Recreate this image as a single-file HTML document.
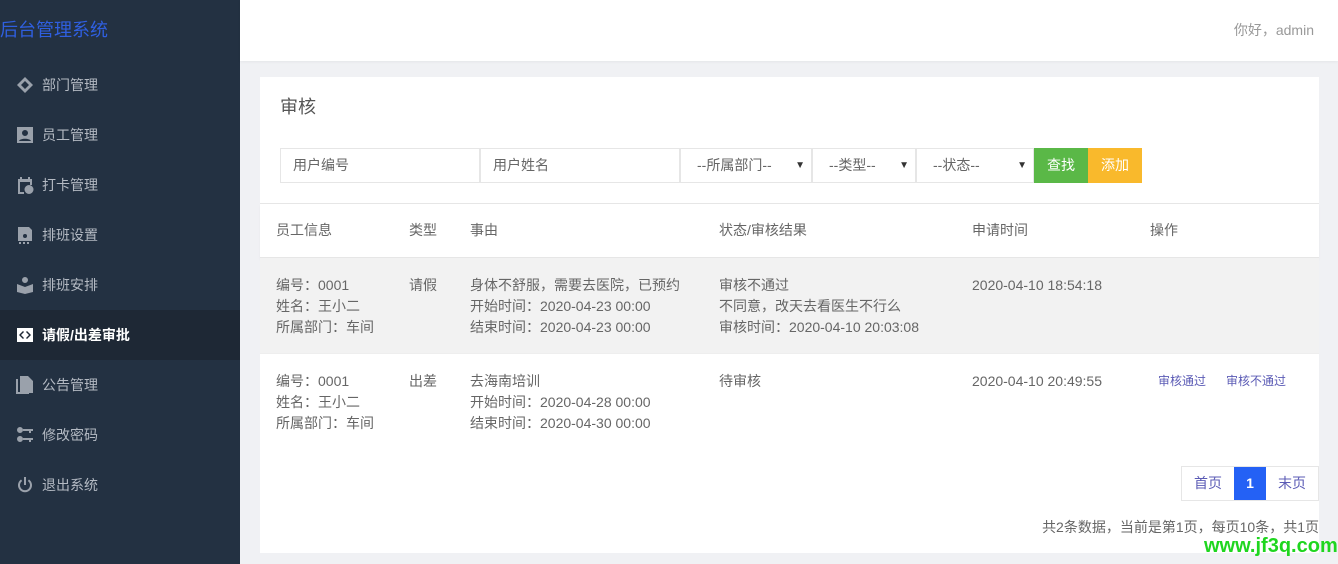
<!DOCTYPE html>
<html><head><meta charset="utf-8"><style>
*{margin:0;padding:0;box-sizing:border-box}
body{width:1338px;height:564px;overflow:hidden;font-family:"Liberation Sans","Noto Sans CJK SC",sans-serif;background:#f0f1f4;position:relative;color:#666;font-size:14px}
.side{position:absolute;left:0;top:0;width:240px;height:564px;background:#233142}
.logo{position:absolute;left:0;top:16px;font-size:18px;color:#2f5fe0}
.menu{position:absolute;top:60px;left:0;width:240px}
.mi{height:50px;display:flex;align-items:center;padding-left:16px;color:#b4bac3;font-size:14px}
.mi svg{width:18px;height:18px;margin-right:8px;fill:#9aa1ab}
.mi.act{background:#1e2835;color:#fff;font-weight:bold}
.mi.act svg{fill:#fff}
.top{position:absolute;left:240px;top:0;width:1098px;height:61px;background:#fff;box-shadow:0 1px 3px rgba(0,0,0,.05)}
.hi{position:absolute;right:24px;top:20px;color:#999;font-size:14px}
.card{position:absolute;left:260px;top:77px;width:1059px;height:476px;background:#fff}
.title{position:absolute;left:20px;top:16px;font-size:18px;color:#555}
.f{position:absolute;top:71px;height:35px;border:1px solid #e6e6e6;font-size:14px;color:#666;padding-left:12px;line-height:33px}
.f .ar{position:absolute;right:6px;top:0;font-size:10px;color:#333}
.btn{position:absolute;top:71px;height:35px;width:54px;color:#fff;line-height:35px;text-align:center;font-size:14px}
.tbl{position:absolute;left:0;top:126px;width:1059px;border-top:1px solid #e6e6e6}
.th{height:54px;position:relative;border-bottom:1px solid #e6e6e6;box-shadow:0 2px 2px rgba(0,0,0,.04)}
.row{height:96px;position:relative;border-bottom:1px solid #eee}
.c{position:absolute;line-height:21px;font-size:14px;color:#666}
.th .c{top:16px}
.row .c{top:17px}
.op{color:#5b5bb5;font-size:12px}
.pg{position:absolute;right:0;top:389px;height:35px;display:flex;border:1px solid #e6e6e6}
.pg div{line-height:33px;padding:0 12px;color:#5b5bb5;font-size:14px}
.pg .on{background:#2461f5;color:#fff;font-weight:bold;width:32px;padding:0;text-align:center}
.info{position:absolute;right:0;top:440px;font-size:14px;color:#666}
.wm{position:absolute;left:1204px;top:535px;color:#1fd61f;font-weight:bold;font-size:20px;font-family:"Liberation Sans",sans-serif}
</style></head><body>
<div class="side">
<div class="logo">后台管理系统</div>
<div class="menu">
<div class="mi"><svg viewBox="0 0 18 18"><path d="M9 1L17 9 9 17 1 9z M9 5L5 9 9 13 13 9z"/></svg>部门管理</div>
<div class="mi"><svg viewBox="0 0 18 18"><path d="M1 1h16v16H1z M9 4a3 3 0 100 6 3 3 0 100-6z M3 15c1-3 11-3 12 0z" fill-rule="evenodd"/></svg>员工管理</div>
<div class="mi"><svg viewBox="0 0 18 18"><path d="M2 3h14v6h-2V6H4v10h4v2H2z M4 1h2v3H4z M12 1h2v3h-2z M13 9a4.5 4.5 0 100 9 4.5 4.5 0 100-9z"/></svg>打卡管理</div>
<div class="mi"><svg viewBox="0 0 18 18"><path d="M2 1h11l3 3v11H2z M9 8a2 2 0 100 4 2 2 0 100-4z M3 16h2v2H3z M7 16h2v2H7z M11 16h2v2h-2z"/></svg>排班设置</div>
<div class="mi"><svg viewBox="0 0 18 18"><path d="M9 1a3 3 0 100 6 3 3 0 100-6z M1 8l8 3 8-3v8l-8 2-8-2z"/></svg>排班安排</div>
<div class="mi act"><svg viewBox="0 0 18 18"><path d="M1 2h16v14H1z M7 5L3 9l4 4 1-1-3-3 3-3z M11 5l-1 1 3 3-3 3 1 1 4-4z" fill-rule="evenodd"/></svg>请假/出差审批</div>
<div class="mi"><svg viewBox="0 0 18 18"><path d="M4 0h8l5 5v12H4z M0 3h2v13h11v2H0z"/></svg>公告管理</div>
<div class="mi"><svg viewBox="0 0 18 18"><path d="M4 1a3 3 0 100 6 3 3 0 100-6z M7 3h10v2h-2v2h-2V5H7z M4 10a3 3 0 100 6 3 3 0 100-6z M7 12h10v2h-2v2h-2v-2H7z"/></svg>修改密码</div>
<div class="mi"><svg viewBox="0 0 18 18"><path d="M8 1h2v8H8z M5 3.5l1.2 1.5A5 5 0 1011.8 5L13 3.5A7 7 0 115 3.5z"/></svg>退出系统</div>
</div></div>
<div class="top"><div class="hi">你好，admin</div></div>
<div class="card">
<div class="title">审核</div>
<div class="f" style="left:20px;width:200px">用户编号</div>
<div class="f" style="left:220px;width:200px">用户姓名</div>
<div class="f" style="left:420px;width:132px;padding-left:16px">--所属部门--<span class="ar">▼</span></div>
<div class="f" style="left:552px;width:104px;padding-left:16px">--类型--<span class="ar">▼</span></div>
<div class="f" style="left:656px;width:118px;padding-left:16px">--状态--<span class="ar">▼</span></div>
<div class="btn" style="left:774px;background:#5ab847">查找</div>
<div class="btn" style="left:828px;background:#f9b92c">添加</div>
<div class="tbl">
<div class="th"><div class="c" style="left:16px">员工信息</div><div class="c" style="left:149px">类型</div><div class="c" style="left:210px">事由</div><div class="c" style="left:459px">状态/审核结果</div><div class="c" style="left:712px">申请时间</div><div class="c" style="left:890px">操作</div></div>
<div class="row" style="background:#f2f2f2"><div class="c" style="left:16px">编号：0001<br>姓名：王小二<br>所属部门：车间</div><div class="c" style="left:149px">请假</div><div class="c" style="left:210px">身体不舒服，需要去医院，已预约<br>开始时间：2020-04-23 00:00<br>结束时间：2020-04-23 00:00</div><div class="c" style="left:459px">审核不通过<br>不同意，改天去看医生不行么<br>审核时间：2020-04-10 20:03:08</div><div class="c" style="left:712px">2020-04-10 18:54:18</div></div>
<div class="row" style="border-bottom:none"><div class="c" style="left:16px">编号：0001<br>姓名：王小二<br>所属部门：车间</div><div class="c" style="left:149px">出差</div><div class="c" style="left:210px">去海南培训<br>开始时间：2020-04-28 00:00<br>结束时间：2020-04-30 00:00</div><div class="c" style="left:459px">待审核</div><div class="c" style="left:712px">2020-04-10 20:49:55</div><div class="c op" style="left:898px">审核通过</div><div class="c op" style="left:966px">审核不通过</div></div>
</div>
<div class="pg"><div>首页</div><div class="on">1</div><div>末页</div></div>
<div class="info">共2条数据，当前是第1页，每页10条，共1页</div>
</div>
<div class="wm">www.jf3q.com</div>
</body></html>
